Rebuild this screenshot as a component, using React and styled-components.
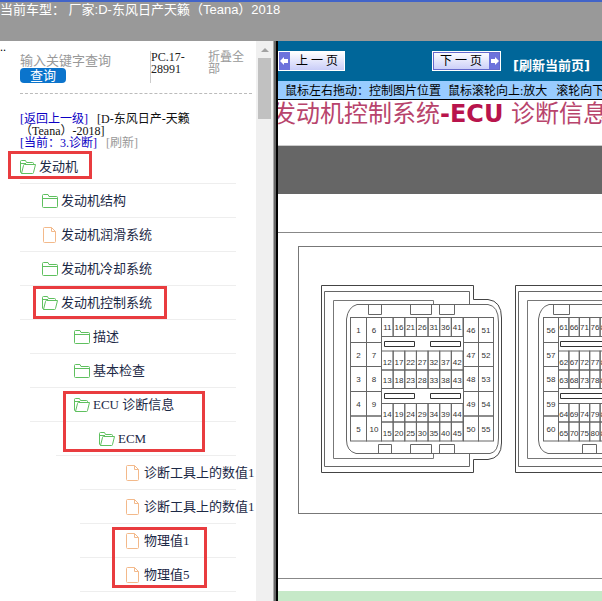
import React from "react";
import styled, { createGlobalStyle } from "styled-components";

const GlobalStyle = createGlobalStyle`
  * {
    box-sizing: border-box;
  }

  body {
    margin: 0;
    background: #fff;
    font-family: "Liberation Serif", "Noto Sans CJK SC", serif;
    font-size: 12px;
  }
`;

// where the divider starts and where the icon starts, per tree level
const levels = [
  { line: 20, icon: 20 },
  { line: 20, icon: 42 },
  { line: 30, icon: 74 },
  { line: 56, icon: 99 },
  { line: 80, icon: 125 },
];

const treeItems = [
  { id: 1, level: 0, type: "open", label: "发动机" },
  { id: 2, level: 1, type: "folder", label: "发动机结构" },
  { id: 3, level: 1, type: "file", label: "发动机润滑系统" },
  { id: 4, level: 1, type: "folder", label: "发动机冷却系统" },
  { id: 5, level: 1, type: "open", label: "发动机控制系统" },
  { id: 6, level: 2, type: "folder", label: "描述" },
  { id: 7, level: 2, type: "folder", label: "基本检查" },
  { id: 8, level: 2, type: "open", label: "ECU 诊断信息" },
  { id: 9, level: 3, type: "open", label: "ECM" },
  { id: 10, level: 4, type: "file", label: "诊断工具上的数值1" },
  { id: 11, level: 4, type: "file", label: "诊断工具上的数值1" },
  { id: 12, level: 4, type: "file", label: "物理值1" },
  { id: 13, level: 4, type: "file", label: "物理值5" },
];

const marks = [
  { left: 8, top: 1, width: 84, height: 28 },
  { left: 33, top: 136, width: 134, height: 33 },
  { left: 63, top: 241, width: 142, height: 61 },
  { left: 112, top: 377, width: 95, height: 61 },
];

const TreeIcon = ({ type }) => {
  if (type === "file") {
    return (
      <svg width="16" height="16" viewBox="0 0 16 16" fill="none" stroke="#f3b98a">
        <path d="M2.5 .5H9.5L13.5 4.5V14.5Q13.5 15.5 12.5 15.5H2.5Q1.5 15.5 1.5 14.5V1.5Q1.5 .5 2.5 .5Z" />
        <path d="M9.5 .5V4.5H13.5" />
      </svg>
    );
  }
  if (type === "open") {
    return (
      <svg width="16" height="16" viewBox="0 0 16 16" fill="none" stroke="#5fc05f">
        <path d="M1.5 14.5L.5 13V2.5Q.5 1.5 1.5 1.5H5.5L6.5 3.5H12.5Q13.5 3.5 13.5 4.5V5.5" />
        <path d="M1.5 14.5L3.5 6.5Q3.5 5.5 4.5 5.5H15.5L13.5 13.5Q13.5 14.5 12.5 14.5Z" />
        <path d="M.5 4.5H6" />
      </svg>
    );
  }
  return (
    <svg width="16" height="16" viewBox="0 0 16 16" fill="none" stroke="#5fc05f">
      <path d="M1.5 1.5H6L7 3.5H14.5Q15.5 3.5 15.5 4.5V13.5Q15.5 14.5 14.5 14.5H1.5Q.5 14.5 .5 13.5V2.5Q.5 1.5 1.5 1.5Z" />
      <path d="M.5 5.5H15.5" />
    </svg>
  );
};

const Arrow = ({ flip }) => (
  <svg width="9" height="10" viewBox="0 0 9 10" fill="#fff">
    <path d={flip ? "M9 5L5 1V3H1V7H5V9Z" : "M0 5L4 1V3H8V7H4V9Z"} />
  </svg>
);

const middleX = (i) => 381.5 + i * 11.64;
const sideRows = [317.5, 342.5, 366.5, 391.5, 416, 441];
const middleRows = [317.5, 351, 370, 403.5, 422];
const middleEnds = [336.5, 370, 388.5, 422, 441];

const Pin = ({ x, y, w, h, n, low }) => (
  <g>
    <rect x={x} y={y} width={w} height={h} />
    <PinText x={x + w / 2} y={y + h / 2 + (low ? 4 : 3)}>
      {n}
    </PinText>
  </g>
);

const SideColumn = ({ x, w, first }) =>
  [0, 1, 2, 3, 4].map((r) => (
    <Pin
      key={r}
      x={x}
      y={sideRows[r]}
      w={w}
      h={sideRows[r + 1] - sideRows[r]}
      n={first + r}
    />
  ));

const MiddleColumn = ({ x, w, first }) =>
  middleRows.map((y, r) => (
    <Pin key={r} x={x} y={y} w={w} h={middleEnds[r] - y} n={first + r} low={r > 0} />
  ));

const Shell = ({ dx }) => (
  <g transform={`translate(${dx} 0)`}>
    <path
      stroke="#444"
      d="M321.5 285.5H473.5V299.5H488Q501.5 301 501.5 318V443Q501.5 458 488 459.5H473.5V472.5H321.5Z"
    />
    <path d="M469.5 304V291.5H324.5V466.5H469.5V454" />
    <path stroke="#777" d="M433.5 304V300.5H333.5V458.5H433.5V454" />
  </g>
);

const ConnectorDrawing = () => (
  <Drawing viewBox="299 247 304 266" role="img" aria-label="ECM">
    <Shell dx={0} />
    <path d="M357 304.5H488Q498.5 306 498.5 322V438Q498.5 452 490 453.5H356Q346.5 451 346.5 440V319Q348 307 357 304.5Z" />
    <path d="M368.5 304.5V314.5H381.5V304.5M410.5 304.5V314.5H431.5V304.5M439.5 304.5V314.5H454.5V304.5" />
    <path d="M378.5 453.5V444.5H391.5V453.5M410.5 453.5V444.5H431.5V453.5M439.5 453.5V444.5H454.5V453.5" />
    <SideColumn x={350.5} w={16} first={1} />
    <SideColumn x={366.5} w={15} first={6} />
    {[0, 1, 2, 3, 4, 5, 6].map((i) => (
      <MiddleColumn key={i} x={middleX(i)} w={11.64} first={11 + i * 5} />
    ))}
    <SideColumn x={463.5} w={15} first={46} />
    <SideColumn x={478.5} w={15} first={51} />
    <path
      stroke="#333"
      d="M384.5 341.5H414.5V346.5H384.5ZM430.5 341.5H460.5V346.5H430.5ZM384.5 393.5H414.5V398.5H384.5ZM430.5 393.5H460.5V398.5H430.5Z"
    />

    <Shell dx={194} />
    <path d="M640 304.5H549Q540 307 538.5 319V440Q539 451 548 453.5H640" />
    <path d="M553.5 304.5V314.5H569.5V304.5M582.5 453.5V444.5H596.5V453.5" />
    <SideColumn x={543.5} w={15} first={56} />
    {[0, 1, 2, 3, 4].map((i) => (
      <MiddleColumn key={i} x={558.5 + i * 10.4} w={10.4} first={61 + i * 5} />
    ))}
    <path stroke="#333" d="M640 341.5H560.5V346.5H640M640 393.5H560.5V398.5H640" />
  </Drawing>
);

const App = () => {
  return (
    <Page>
      <GlobalStyle />
      <TopBar>当前车型： 厂家:D-东风日产天籁（Teana）2018</TopBar>
      <Body>
        <Sidebar>
          <Dots>..</Dots>
          <SearchBar>
            <SearchForm onSubmit={(e) => e.preventDefault()}>
              <SearchInput aria-label="输入关键字查询" placeholder="输入关键字查询" />
              <SearchButton type="submit">查询</SearchButton>
            </SearchForm>
            <Version>
              PC.17-
              <br />
              28991
            </Version>
            <CollapseLink href="#collapse">折叠全部</CollapseLink>
          </SearchBar>
          <Path>
            <PathLink href="#back">[返回上一级]</PathLink>
            <PathLink href="#car" $color="#111">
              [D-东风日产-天籁（Teana）-2018]
            </PathLink>
            <br />
            <PathLink href="#current">[当前：3.诊断]</PathLink>
            <PathLink href="#refresh" $color="#999">
              [刷新]
            </PathLink>
          </Path>
          <Tree>
            {treeItems.map((item) => (
              <TreeRow key={item.id} $level={item.level}>
                <TreeIcon type={item.type} />
                <TreeLink href={`#node-${item.id}`}>{item.label}</TreeLink>
              </TreeRow>
            ))}
            {marks.map((mark) => (
              <Mark key={mark.top} $box={mark} />
            ))}
          </Tree>
        </Sidebar>
        <ScrollTrack>
          <ScrollArrow />
          <ScrollThumb />
        </ScrollTrack>
        <Splitter />
        <Main>
          <PageNav>
            <PageButton type="button">
              <ArrowBox>
                <Arrow />
              </ArrowBox>
              <ButtonText>上 一 页</ButtonText>
            </PageButton>
            <PageButton type="button" $next>
              <ButtonText>下 一 页</ButtonText>
              <ArrowBox>
                <Arrow flip />
              </ArrowBox>
            </PageButton>
            <ReloadLink href="#reload">[刷新当前页]</ReloadLink>
          </PageNav>
          <Hint>
            <span>鼠标左右拖动：控制图片位置</span>
            <HintBar />
            <span>鼠标滚轮向上:放大</span>
            <HintLast>滚轮向下</HintLast>
          </Hint>
          <Title>
            发动机控制系统<b>-ECU</b> 诊断信息
          </Title>
          <Band />
          <Sheet>
            <Figure>
              <ConnectorDrawing />
            </Figure>
          </Sheet>
          <Footer />
        </Main>
      </Body>
    </Page>
  );
};

export default App;

const Page = styled.div`
  display: flex;
  flex-direction: column;
  height: 100vh;
  overflow: hidden;
`;

const TopBar = styled.header`
  flex: none;
  height: 41px;
  border-top: 2px solid #4264c8;
  background: #999;
  color: #fff;
  font-family: "Liberation Sans", "Noto Sans CJK SC", sans-serif;
  font-size: 13px;
  line-height: 15px;
  white-space: nowrap;
`;

const Body = styled.div`
  flex: 1;
  display: flex;
  min-height: 0;
`;

const Sidebar = styled.aside`
  flex: 0 0 256px;
  overflow: hidden;
`;

const Dots = styled.div`
  height: 10px;
  line-height: 12px;
`;

const SearchBar = styled.div`
  display: grid;
  grid-template-columns: 1fr 58px 44px;
  height: 43px;
  margin: 0 4px 0 20px;
  border-bottom: 1px dashed #bbb;
  line-height: 12px;
`;

const SearchForm = styled.form`
  display: flex;
  flex-direction: column;
  align-items: flex-start;
`;

const SearchInput = styled.input`
  width: 100%;
  height: 17px;
  padding: 2px 0 0;
  border: 0;
  outline: 0;
  background: transparent;
  font-family: inherit;
  font-size: 13px;

  &::placeholder {
    color: #999;
  }
`;

const SearchButton = styled.button`
  width: 46px;
  height: 15px;
  padding: 0;
  border: 0;
  border-radius: 4px;
  background: #0b74cc;
  color: #fff;
  font-family: inherit;
  font-size: 13px;
  line-height: 15px;
`;

const Version = styled.div`
  height: 32px;
  border-left: 1px solid #ccc;
  color: #222;
`;

const CollapseLink = styled.a`
  color: #999;
  text-decoration: none;
`;

const Path = styled.div`
  height: 56px;
  padding: 19px 60px 0 20px;
  line-height: 12px;
`;

const PathLink = styled.a`
  margin-right: 9px;
  color: ${(props) => props.$color || "#0b00c4"};
  text-decoration: none;
`;

const Tree = styled.ul`
  position: relative;
  margin: 0;
  padding: 0;
  list-style: none;
`;

const TreeRow = styled.li`
  display: flex;
  align-items: center;
  gap: 3px;
  height: 34px;
  margin-left: ${(props) => levels[props.$level].line}px;
  margin-right: 20px;
  padding-left: ${(props) =>
    levels[props.$level].icon - levels[props.$level].line}px;
  border-bottom: 1px solid #eee;

  svg {
    flex: none;
  }
`;

const TreeLink = styled.a`
  color: #1c2946;
  font-size: 13px;
  line-height: 16px;
  white-space: nowrap;
  text-decoration: none;
`;

const Mark = styled.div`
  position: absolute;
  left: ${(props) => props.$box.left}px;
  top: ${(props) => props.$box.top}px;
  width: ${(props) => props.$box.width}px;
  height: ${(props) => props.$box.height}px;
  border: 3px solid #e93c3f;
  pointer-events: none;
`;

const ScrollTrack = styled.div`
  flex: 0 0 17px;
  display: flex;
  flex-direction: column;
  align-items: center;
  background: #f0f0f0;
`;

const ScrollArrow = styled.div`
  margin: 7px 0 6px;
  border: 4px solid transparent;
  border-top: 0;
  border-bottom-color: #a3a3a3;
`;

const ScrollThumb = styled.div`
  width: 13px;
  height: 61px;
  background: #c1c1c1;
`;

const Splitter = styled.div`
  flex: 0 0 5px;
  border-left: 1px solid #aaa;
  border-right: 2px solid #000;
  background: #666;
`;

const Main = styled.main`
  flex: 1;
  display: flex;
  flex-direction: column;
  min-width: 0;
  overflow: hidden;
`;

const PageNav = styled.nav`
  flex: none;
  display: flex;
  align-items: center;
  height: 40px;
  background: #069;
`;

const PageButton = styled.button`
  flex: none;
  display: flex;
  align-items: stretch;
  width: ${(props) => (props.$next ? 69 : 67)}px;
  height: 20px;
  margin-left: ${(props) => (props.$next ? 87 : 0)}px;
  padding: 0;
  border: 1px solid #fff;
  outline: ${(props) => (props.$next ? "1px solid #6669cc" : "0")};
  outline-offset: -2px;
  background: linear-gradient(#fff, #c9cdf8);
  color: #000;
`;

const ArrowBox = styled.span`
  display: flex;
  flex: 0 0 11px;
  align-items: center;
  justify-content: center;
  background: #6c72dc;
`;

const ButtonText = styled.span`
  flex: 1;
  font-family: "Liberation Serif", "Noto Sans CJK SC", serif;
  font-size: 12px;
  line-height: 18px;
  text-align: center;
  white-space: nowrap;
`;

const ReloadLink = styled.a`
  margin: 10px 0 0 12px;
  color: #fff;
  font-family: "DejaVu Sans", "Noto Sans CJK SC", sans-serif;
  font-size: 13px;
  font-weight: bold;
  line-height: 16px;
  white-space: nowrap;
  text-decoration: none;
`;

const Hint = styled.div`
  flex: none;
  display: flex;
  align-items: center;
  height: 19px;
  padding-left: 7px;
  border-bottom: 1px solid #000;
  background: #9cf;
  white-space: nowrap;
`;

const HintBar = styled.i`
  width: 1px;
  height: 11px;
  margin: 0 3px 0 4px;
  background: #7aa3cc;
`;

const HintLast = styled.span`
  margin-left: 9px;
`;

const Title = styled.h1`
  flex: none;
  height: 45px;
  margin: 0 0 0 -6px;
  color: #b8446c;
  font-family: "DejaVu Sans", "Noto Sans CJK SC", sans-serif;
  font-size: 24px;
  font-weight: normal;
  line-height: 28px;
  white-space: nowrap;

  b {
    color: #b8144c;
  }
`;

const Band = styled.div`
  flex: none;
  height: 49px;
  border-top: 1px solid #ccc;
  background: #666;
`;

const Sheet = styled.section`
  flex: none;
  margin-top: 38px;
  padding: 13px 0 64px 20px;
  border-top: 1px solid #888;
  border-bottom: 1px solid #888;
`;

const Figure = styled.figure`
  height: 268px;
  margin: 0;
  border: 1px solid #777;
  border-right: 0;
  overflow: hidden;
`;

const Drawing = styled.svg`
  display: block;
  width: 304px;
  height: 266px;
  fill: none;
  stroke: #666;
`;

const PinText = styled.text`
  fill: #333;
  stroke: none;
  font-family: "Liberation Sans", sans-serif;
  font-size: 8px;
  text-anchor: middle;
`;

const Footer = styled.footer`
  flex: 1;
  margin-top: 12px;
  background: #c6e9c8;
`;
